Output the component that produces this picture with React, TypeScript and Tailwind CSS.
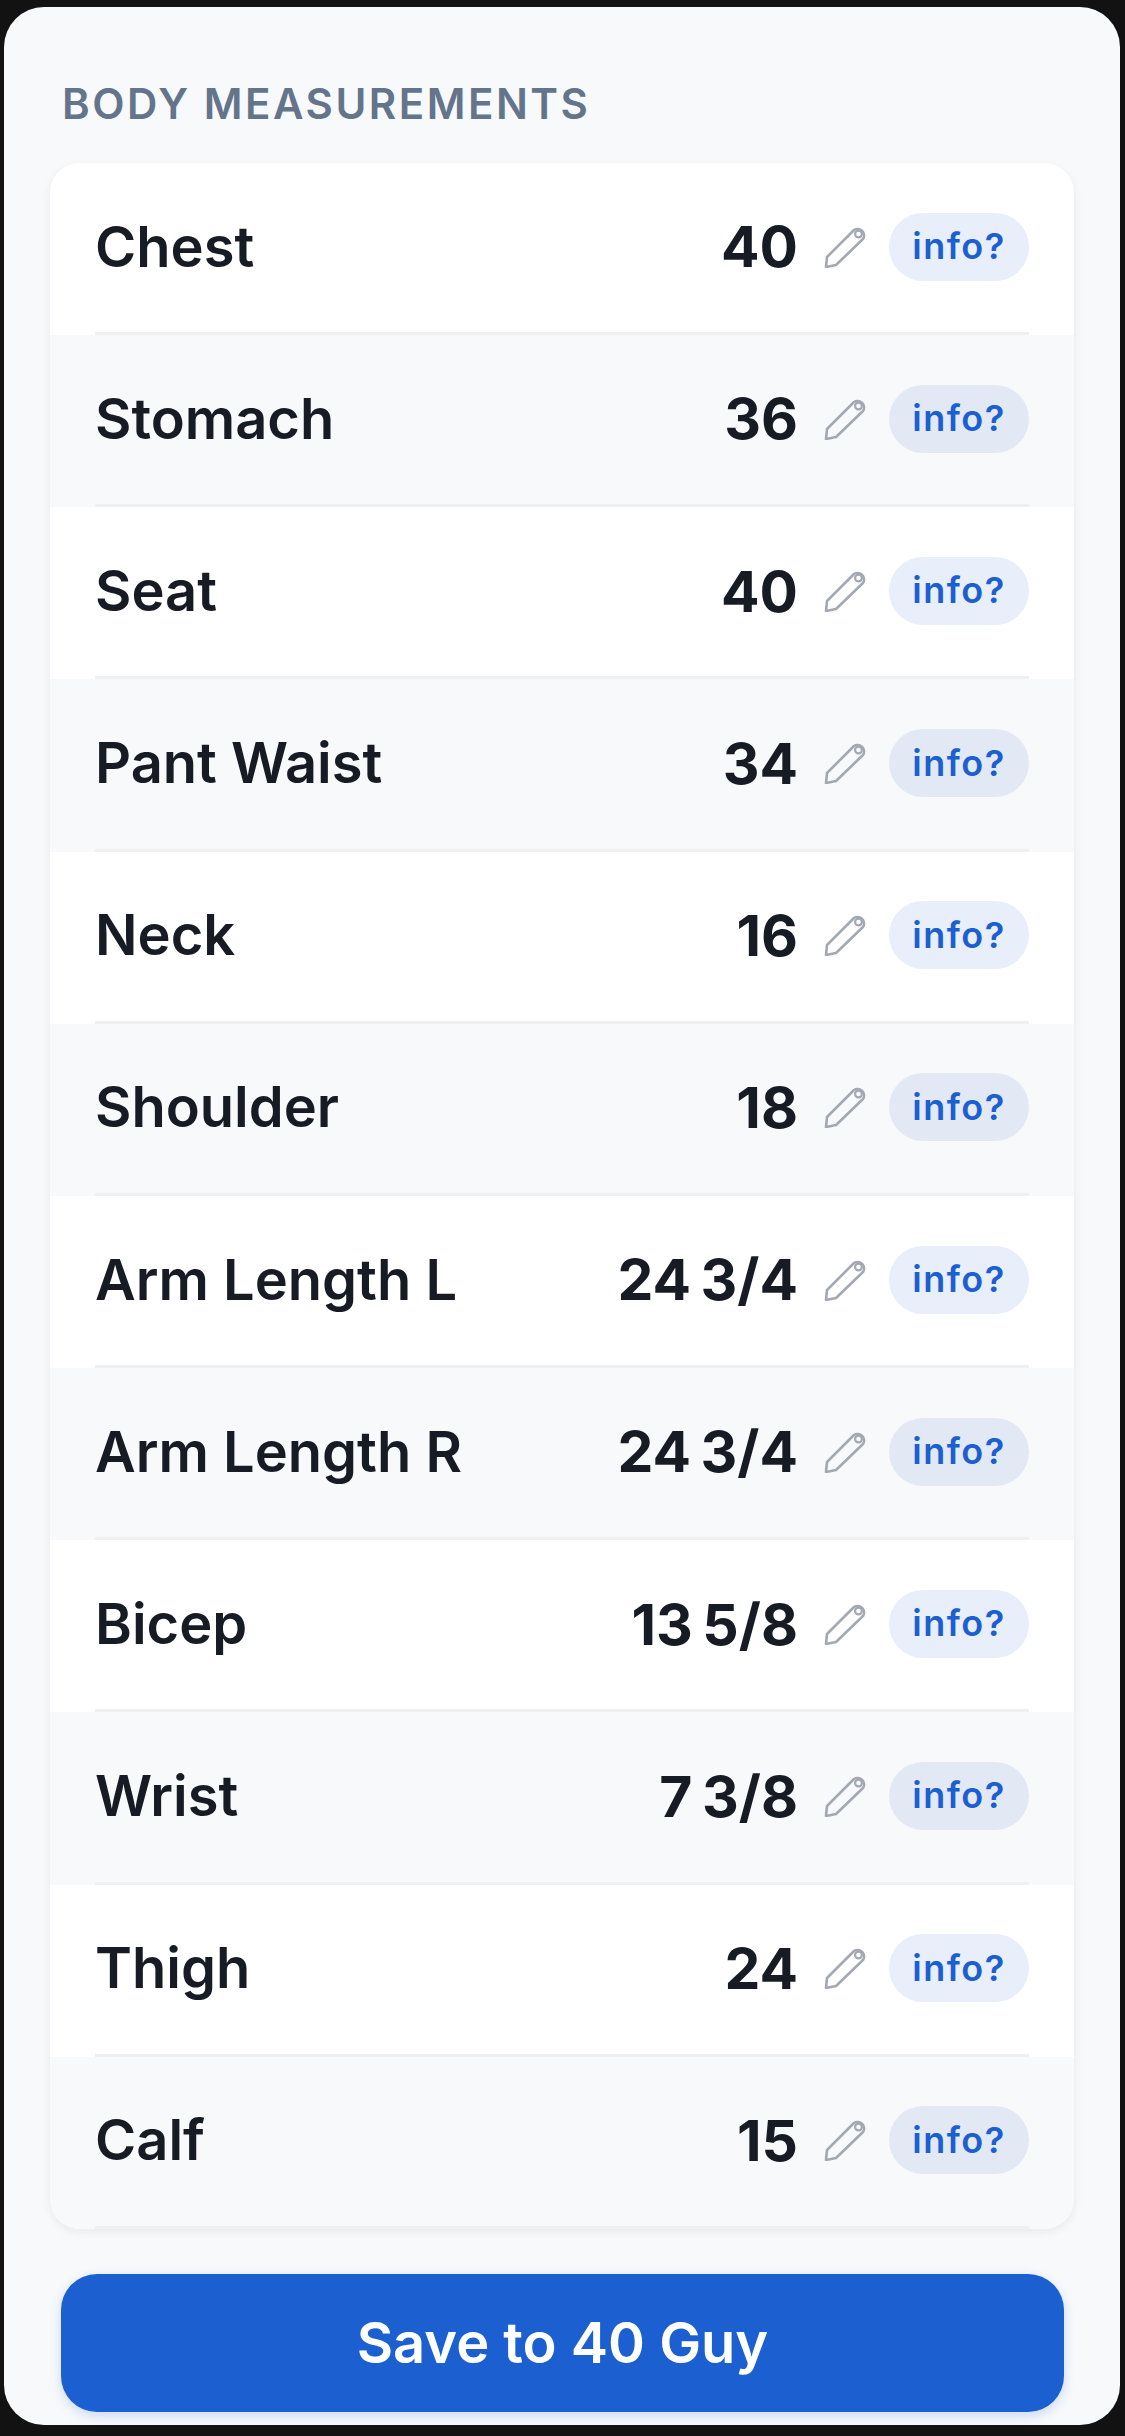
const rows: [string, string][] = [
  ["Chest", "40"],
  ["Stomach", "36"],
  ["Seat", "40"],
  ["Pant Waist", "34"],
  ["Neck", "16"],
  ["Shoulder", "18"],
  ["Arm Length L", "24 3/4"],
  ["Arm Length R", "24 3/4"],
  ["Bicep", "13 5/8"],
  ["Wrist", "7 3/8"],
  ["Thigh", "24"],
  ["Calf", "15"],
];

function PencilIcon() {
  return (
    <svg viewBox="0 0 42 42" className="h-[42px] w-[42px] shrink-0" fill="none" stroke="#a3a9b3" strokeWidth="2.6" strokeLinejoin="round" strokeLinecap="round">
      <path d="M3 31 L30 4 A6.5 6.5 0 0 1 39 13 L12 39 L2 41 Z" />
      <circle cx="34.5" cy="8" r="3.4" strokeWidth="2.2" />
    </svg>
  );
}

export default function App() {
  return (
    <div className="h-[2436px] w-[1125px] bg-[#121212] pb-[11px] pl-[4px] pr-[5px] pt-[7px] font-['Inter',sans-serif]">
      <div className="flex h-full flex-col rounded-[40px] bg-[#f8f9fb] px-[46px] pt-[72px]">
        <h2 className="pl-[12px] text-[42px] leading-[50px] font-semibold tracking-[0.06em] text-[#64748b]">BODY MEASUREMENTS</h2>
        <div className="mt-[34px] overflow-hidden rounded-[30px] bg-white shadow-[0_3px_10px_rgba(15,23,42,0.07)]">
          {rows.map(([name, value], i) => (
            <div key={name} className={i % 2 === 1 ? "bg-[#f8f9fb] px-[45px]" : "bg-white px-[45px]"}>
              <div className="flex h-[172.17px] items-center border-b-[3px] border-[#eef0f3]">
                <span className="flex-1 pb-[2px] text-[56px] font-[640] text-[#171b24]">{name}</span>
                <span className="pb-[1px] text-[57px] font-[650] text-[#171b24] [word-spacing:-4px]">{value}</span>
                <span className="-mt-[2px] ml-[26px] mr-[23px] flex"><PencilIcon /></span>
                <span className={(i % 2 === 1 ? "bg-[#e2e9f5]" : "bg-[#e8eefa]") + " -mt-[2px] flex h-[68px] w-[140px] items-center justify-center rounded-full pb-[1px] text-[36px] font-semibold tracking-[1.5px] text-[#1b5fd1]"}>info?</span>
              </div>
            </div>
          ))}
        </div>
        <button className="ml-[11px] mr-[10px] mt-[45px] h-[138px] rounded-[36px] bg-[#1b5fd1] text-[56px] font-semibold text-white shadow-[0_4px_12px_rgba(27,95,209,0.2)]">Save to 40 Guy</button>
      </div>
    </div>
  );
}
